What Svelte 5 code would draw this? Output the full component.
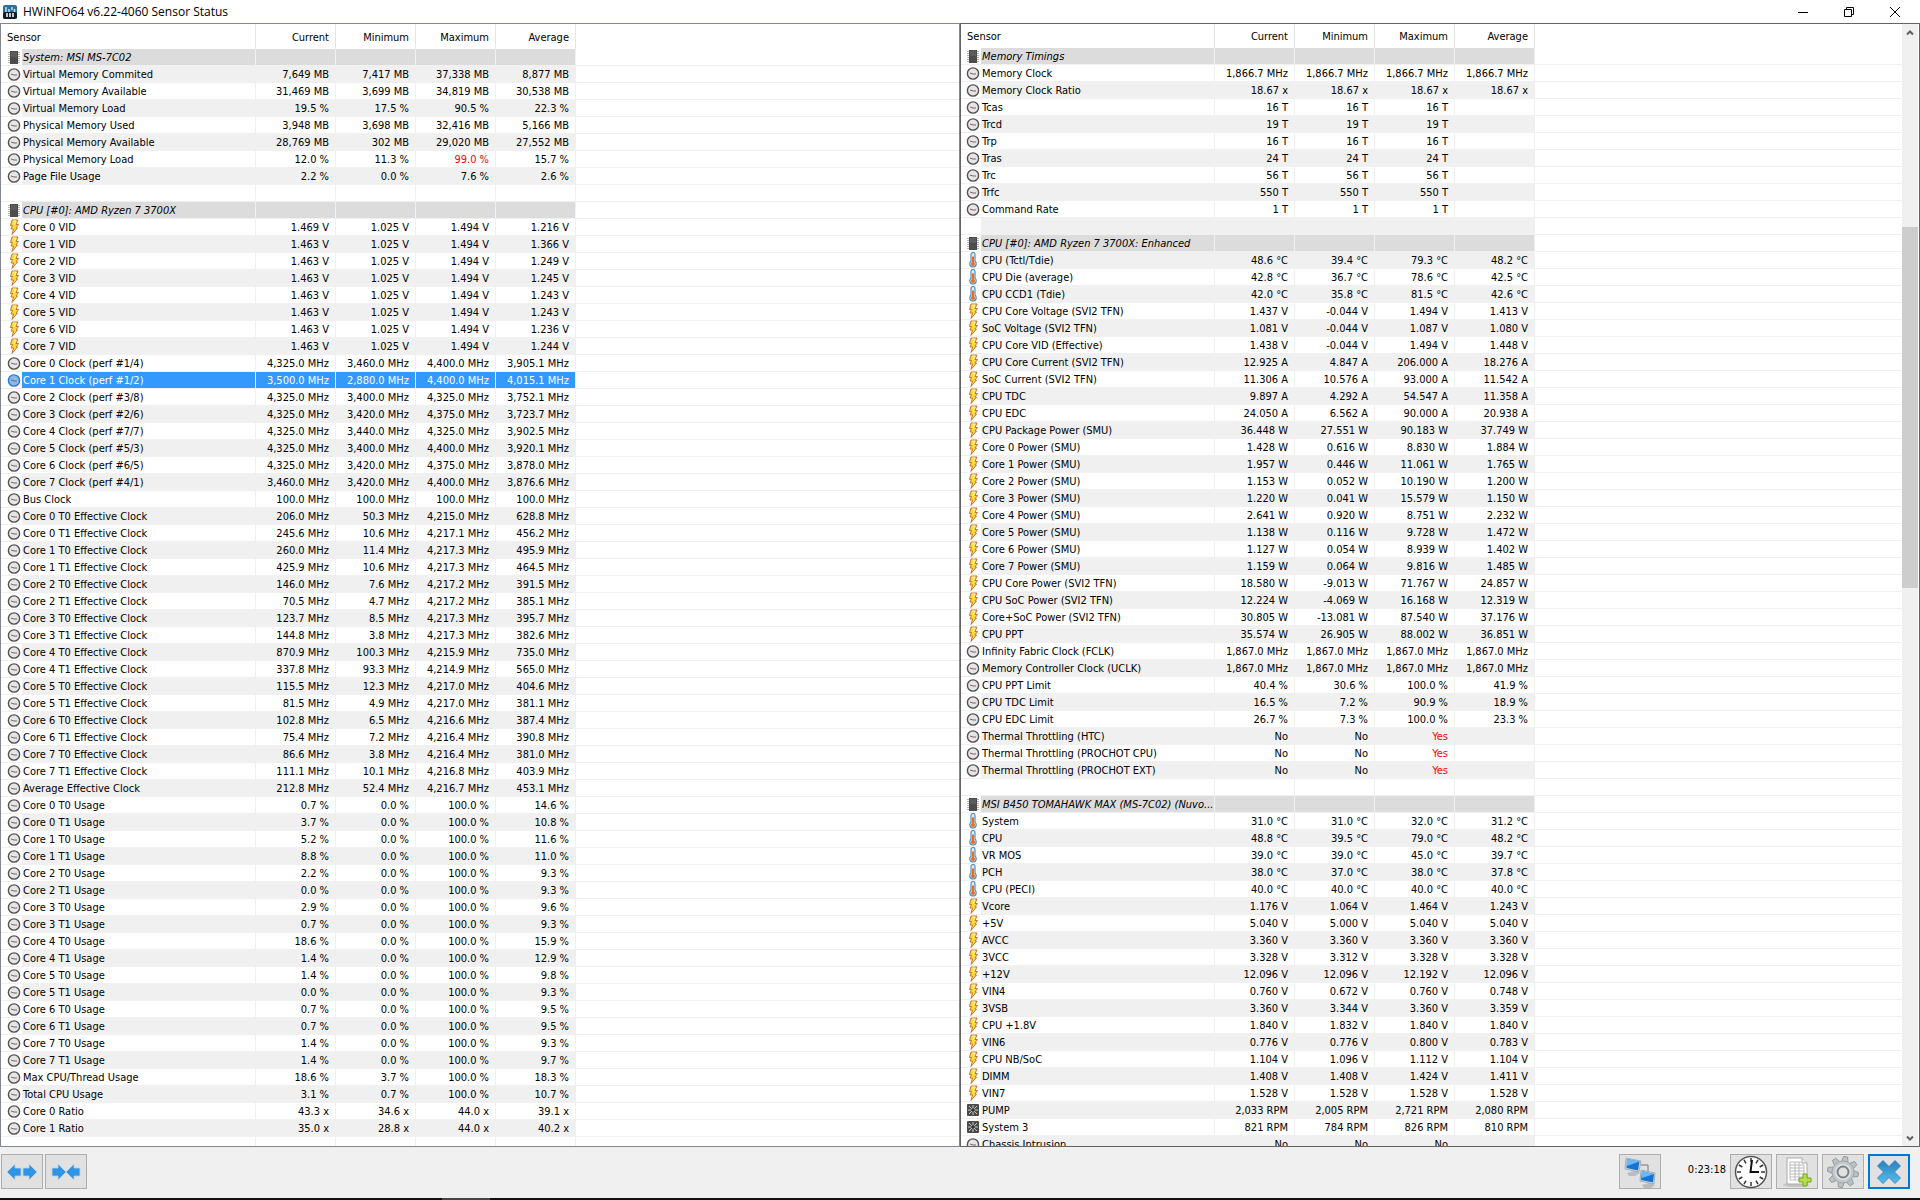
<script>
	const same = (value) => [value, value, value, value];

	// icon, name, current, minimum, maximum, average ("!" marks an alarm value)
	const left = [
		["chip", "System: MSI MS-7C02"],
		["clock", "Virtual Memory Commited", "7,649 MB", "7,417 MB", "37,338 MB", "8,877 MB"],
		["clock", "Virtual Memory Available", "31,469 MB", "3,699 MB", "34,819 MB", "30,538 MB"],
		["clock", "Virtual Memory Load", "19.5 %", "17.5 %", "90.5 %", "22.3 %"],
		["clock", "Physical Memory Used", "3,948 MB", "3,698 MB", "32,416 MB", "5,166 MB"],
		["clock", "Physical Memory Available", "28,769 MB", "302 MB", "29,020 MB", "27,552 MB"],
		["clock", "Physical Memory Load", "12.0 %", "11.3 %", "!99.0 %", "15.7 %"],
		["clock", "Page File Usage", "2.2 %", "0.0 %", "7.6 %", "2.6 %"],
		[],
		["chip", "CPU [#0]: AMD Ryzen 7 3700X"],
		["bolt", "Core 0 VID", "1.469 V", "1.025 V", "1.494 V", "1.216 V"],
		["bolt", "Core 1 VID", "1.463 V", "1.025 V", "1.494 V", "1.366 V"],
		["bolt", "Core 2 VID", "1.463 V", "1.025 V", "1.494 V", "1.249 V"],
		["bolt", "Core 3 VID", "1.463 V", "1.025 V", "1.494 V", "1.245 V"],
		["bolt", "Core 4 VID", "1.463 V", "1.025 V", "1.494 V", "1.243 V"],
		["bolt", "Core 5 VID", "1.463 V", "1.025 V", "1.494 V", "1.243 V"],
		["bolt", "Core 6 VID", "1.463 V", "1.025 V", "1.494 V", "1.236 V"],
		["bolt", "Core 7 VID", "1.463 V", "1.025 V", "1.494 V", "1.244 V"],
		["clock", "Core 0 Clock (perf #1/4)", "4,325.0 MHz", "3,460.0 MHz", "4,400.0 MHz", "3,905.1 MHz"],
		["clock", "Core 1 Clock (perf #1/2)", "3,500.0 MHz", "2,880.0 MHz", "4,400.0 MHz", "4,015.1 MHz"],
		["clock", "Core 2 Clock (perf #3/8)", "4,325.0 MHz", "3,400.0 MHz", "4,325.0 MHz", "3,752.1 MHz"],
		["clock", "Core 3 Clock (perf #2/6)", "4,325.0 MHz", "3,420.0 MHz", "4,375.0 MHz", "3,723.7 MHz"],
		["clock", "Core 4 Clock (perf #7/7)", "4,325.0 MHz", "3,440.0 MHz", "4,325.0 MHz", "3,902.5 MHz"],
		["clock", "Core 5 Clock (perf #5/3)", "4,325.0 MHz", "3,400.0 MHz", "4,400.0 MHz", "3,920.1 MHz"],
		["clock", "Core 6 Clock (perf #6/5)", "4,325.0 MHz", "3,420.0 MHz", "4,375.0 MHz", "3,878.0 MHz"],
		["clock", "Core 7 Clock (perf #4/1)", "3,460.0 MHz", "3,420.0 MHz", "4,400.0 MHz", "3,876.6 MHz"],
		["clock", "Bus Clock", ...same("100.0 MHz")],
		["clock", "Core 0 T0 Effective Clock", "206.0 MHz", "50.3 MHz", "4,215.0 MHz", "628.8 MHz"],
		["clock", "Core 0 T1 Effective Clock", "245.6 MHz", "10.6 MHz", "4,217.1 MHz", "456.2 MHz"],
		["clock", "Core 1 T0 Effective Clock", "260.0 MHz", "11.4 MHz", "4,217.3 MHz", "495.9 MHz"],
		["clock", "Core 1 T1 Effective Clock", "425.9 MHz", "10.6 MHz", "4,217.3 MHz", "464.5 MHz"],
		["clock", "Core 2 T0 Effective Clock", "146.0 MHz", "7.6 MHz", "4,217.2 MHz", "391.5 MHz"],
		["clock", "Core 2 T1 Effective Clock", "70.5 MHz", "4.7 MHz", "4,217.2 MHz", "385.1 MHz"],
		["clock", "Core 3 T0 Effective Clock", "123.7 MHz", "8.5 MHz", "4,217.3 MHz", "395.7 MHz"],
		["clock", "Core 3 T1 Effective Clock", "144.8 MHz", "3.8 MHz", "4,217.3 MHz", "382.6 MHz"],
		["clock", "Core 4 T0 Effective Clock", "870.9 MHz", "100.3 MHz", "4,215.9 MHz", "735.0 MHz"],
		["clock", "Core 4 T1 Effective Clock", "337.8 MHz", "93.3 MHz", "4,214.9 MHz", "565.0 MHz"],
		["clock", "Core 5 T0 Effective Clock", "115.5 MHz", "12.3 MHz", "4,217.0 MHz", "404.6 MHz"],
		["clock", "Core 5 T1 Effective Clock", "81.5 MHz", "4.9 MHz", "4,217.0 MHz", "381.1 MHz"],
		["clock", "Core 6 T0 Effective Clock", "102.8 MHz", "6.5 MHz", "4,216.6 MHz", "387.4 MHz"],
		["clock", "Core 6 T1 Effective Clock", "75.4 MHz", "7.2 MHz", "4,216.4 MHz", "390.8 MHz"],
		["clock", "Core 7 T0 Effective Clock", "86.6 MHz", "3.8 MHz", "4,216.4 MHz", "381.0 MHz"],
		["clock", "Core 7 T1 Effective Clock", "111.1 MHz", "10.1 MHz", "4,216.8 MHz", "403.9 MHz"],
		["clock", "Average Effective Clock", "212.8 MHz", "52.4 MHz", "4,216.7 MHz", "453.1 MHz"],
		["clock", "Core 0 T0 Usage", "0.7 %", "0.0 %", "100.0 %", "14.6 %"],
		["clock", "Core 0 T1 Usage", "3.7 %", "0.0 %", "100.0 %", "10.8 %"],
		["clock", "Core 1 T0 Usage", "5.2 %", "0.0 %", "100.0 %", "11.6 %"],
		["clock", "Core 1 T1 Usage", "8.8 %", "0.0 %", "100.0 %", "11.0 %"],
		["clock", "Core 2 T0 Usage", "2.2 %", "0.0 %", "100.0 %", "9.3 %"],
		["clock", "Core 2 T1 Usage", "0.0 %", "0.0 %", "100.0 %", "9.3 %"],
		["clock", "Core 3 T0 Usage", "2.9 %", "0.0 %", "100.0 %", "9.6 %"],
		["clock", "Core 3 T1 Usage", "0.7 %", "0.0 %", "100.0 %", "9.3 %"],
		["clock", "Core 4 T0 Usage", "18.6 %", "0.0 %", "100.0 %", "15.9 %"],
		["clock", "Core 4 T1 Usage", "1.4 %", "0.0 %", "100.0 %", "12.9 %"],
		["clock", "Core 5 T0 Usage", "1.4 %", "0.0 %", "100.0 %", "9.8 %"],
		["clock", "Core 5 T1 Usage", "0.0 %", "0.0 %", "100.0 %", "9.3 %"],
		["clock", "Core 6 T0 Usage", "0.7 %", "0.0 %", "100.0 %", "9.5 %"],
		["clock", "Core 6 T1 Usage", "0.7 %", "0.0 %", "100.0 %", "9.5 %"],
		["clock", "Core 7 T0 Usage", "1.4 %", "0.0 %", "100.0 %", "9.3 %"],
		["clock", "Core 7 T1 Usage", "1.4 %", "0.0 %", "100.0 %", "9.7 %"],
		["clock", "Max CPU/Thread Usage", "18.6 %", "3.7 %", "100.0 %", "18.3 %"],
		["clock", "Total CPU Usage", "3.1 %", "0.7 %", "100.0 %", "10.7 %"],
		["clock", "Core 0 Ratio", "43.3 x", "34.6 x", "44.0 x", "39.1 x"],
		["clock", "Core 1 Ratio", "35.0 x", "28.8 x", "44.0 x", "40.2 x"],
		[],
	];

	const right = [
		["chip", "Memory Timings"],
		["clock", "Memory Clock", ...same("1,866.7 MHz")],
		["clock", "Memory Clock Ratio", ...same("18.67 x")],
		["clock", "Tcas", "16 T", "16 T", "16 T"],
		["clock", "Trcd", "19 T", "19 T", "19 T"],
		["clock", "Trp", "16 T", "16 T", "16 T"],
		["clock", "Tras", "24 T", "24 T", "24 T"],
		["clock", "Trc", "56 T", "56 T", "56 T"],
		["clock", "Trfc", "550 T", "550 T", "550 T"],
		["clock", "Command Rate", "1 T", "1 T", "1 T"],
		[],
		["chip", "CPU [#0]: AMD Ryzen 7 3700X: Enhanced"],
		["temp", "CPU (Tctl/Tdie)", "48.6 °C", "39.4 °C", "79.3 °C", "48.2 °C"],
		["temp", "CPU Die (average)", "42.8 °C", "36.7 °C", "78.6 °C", "42.5 °C"],
		["temp", "CPU CCD1 (Tdie)", "42.0 °C", "35.8 °C", "81.5 °C", "42.6 °C"],
		["bolt", "CPU Core Voltage (SVI2 TFN)", "1.437 V", "-0.044 V", "1.494 V", "1.413 V"],
		["bolt", "SoC Voltage (SVI2 TFN)", "1.081 V", "-0.044 V", "1.087 V", "1.080 V"],
		["bolt", "CPU Core VID (Effective)", "1.438 V", "-0.044 V", "1.494 V", "1.448 V"],
		["bolt", "CPU Core Current (SVI2 TFN)", "12.925 A", "4.847 A", "206.000 A", "18.276 A"],
		["bolt", "SoC Current (SVI2 TFN)", "11.306 A", "10.576 A", "93.000 A", "11.542 A"],
		["bolt", "CPU TDC", "9.897 A", "4.292 A", "54.547 A", "11.358 A"],
		["bolt", "CPU EDC", "24.050 A", "6.562 A", "90.000 A", "20.938 A"],
		["bolt", "CPU Package Power (SMU)", "36.448 W", "27.551 W", "90.183 W", "37.749 W"],
		["bolt", "Core 0 Power (SMU)", "1.428 W", "0.616 W", "8.830 W", "1.884 W"],
		["bolt", "Core 1 Power (SMU)", "1.957 W", "0.446 W", "11.061 W", "1.765 W"],
		["bolt", "Core 2 Power (SMU)", "1.153 W", "0.052 W", "10.190 W", "1.200 W"],
		["bolt", "Core 3 Power (SMU)", "1.220 W", "0.041 W", "15.579 W", "1.150 W"],
		["bolt", "Core 4 Power (SMU)", "2.641 W", "0.920 W", "8.751 W", "2.232 W"],
		["bolt", "Core 5 Power (SMU)", "1.138 W", "0.116 W", "9.728 W", "1.472 W"],
		["bolt", "Core 6 Power (SMU)", "1.127 W", "0.054 W", "8.939 W", "1.402 W"],
		["bolt", "Core 7 Power (SMU)", "1.159 W", "0.064 W", "9.816 W", "1.485 W"],
		["bolt", "CPU Core Power (SVI2 TFN)", "18.580 W", "-9.013 W", "71.767 W", "24.857 W"],
		["bolt", "CPU SoC Power (SVI2 TFN)", "12.224 W", "-4.069 W", "16.168 W", "12.319 W"],
		["bolt", "Core+SoC Power (SVI2 TFN)", "30.805 W", "-13.081 W", "87.540 W", "37.176 W"],
		["bolt", "CPU PPT", "35.574 W", "26.905 W", "88.002 W", "36.851 W"],
		["clock", "Infinity Fabric Clock (FCLK)", ...same("1,867.0 MHz")],
		["clock", "Memory Controller Clock (UCLK)", ...same("1,867.0 MHz")],
		["clock", "CPU PPT Limit", "40.4 %", "30.6 %", "100.0 %", "41.9 %"],
		["clock", "CPU TDC Limit", "16.5 %", "7.2 %", "90.9 %", "18.9 %"],
		["clock", "CPU EDC Limit", "26.7 %", "7.3 %", "100.0 %", "23.3 %"],
		["clock", "Thermal Throttling (HTC)", "No", "No", "!Yes"],
		["clock", "Thermal Throttling (PROCHOT CPU)", "No", "No", "!Yes"],
		["clock", "Thermal Throttling (PROCHOT EXT)", "No", "No", "!Yes"],
		[],
		["chip", "MSI B450 TOMAHAWK MAX (MS-7C02) (Nuvo..."],
		["temp", "System", "31.0 °C", "31.0 °C", "32.0 °C", "31.2 °C"],
		["temp", "CPU", "48.8 °C", "39.5 °C", "79.0 °C", "48.2 °C"],
		["temp", "VR MOS", "39.0 °C", "39.0 °C", "45.0 °C", "39.7 °C"],
		["temp", "PCH", "38.0 °C", "37.0 °C", "38.0 °C", "37.8 °C"],
		["temp", "CPU (PECI)", ...same("40.0 °C")],
		["bolt", "Vcore", "1.176 V", "1.064 V", "1.464 V", "1.243 V"],
		["bolt", "+5V", "5.040 V", "5.000 V", "5.040 V", "5.040 V"],
		["bolt", "AVCC", ...same("3.360 V")],
		["bolt", "3VCC", "3.328 V", "3.312 V", "3.328 V", "3.328 V"],
		["bolt", "+12V", "12.096 V", "12.096 V", "12.192 V", "12.096 V"],
		["bolt", "VIN4", "0.760 V", "0.672 V", "0.760 V", "0.748 V"],
		["bolt", "3VSB", "3.360 V", "3.344 V", "3.360 V", "3.359 V"],
		["bolt", "CPU +1.8V", "1.840 V", "1.832 V", "1.840 V", "1.840 V"],
		["bolt", "VIN6", "0.776 V", "0.776 V", "0.800 V", "0.783 V"],
		["bolt", "CPU NB/SoC", "1.104 V", "1.096 V", "1.112 V", "1.104 V"],
		["bolt", "DIMM", "1.408 V", "1.408 V", "1.424 V", "1.411 V"],
		["bolt", "VIN7", ...same("1.528 V")],
		["fan", "PUMP", "2,033 RPM", "2,005 RPM", "2,721 RPM", "2,080 RPM"],
		["fan", "System 3", "821 RPM", "784 RPM", "826 RPM", "810 RPM"],
		["clock", "Chassis Intrusion", "No", "No", "No"],
	];

	const columns = ["Current", "Minimum", "Maximum", "Average"];
	const ticks = [0, 30, 60, 90, 120, 150, 180, 210, 240, 270, 300, 330];
	const teeth = [0, 45, 90, 135, 180, 225, 270, 315];

	let selected = left[19];
</script>

{#snippet icon(kind)}
	<svg class="icon" viewBox="0 0 16 16" aria-hidden="true">
		{#if kind === "clock"}
			<circle cx="8" cy="8.500" r="5.600" fill="#e6e6e6" stroke="#505050" stroke-width="1.400" />
			<path d="M5 8l3 1h3" fill="none" stroke="#7d6262" stroke-width="1" />
		{:else if kind === "chip"}
			<path d="M2 3.500h12M2 5.500h12M2 7.500h12M2 9.500h12M2 11.500h12M2 13.500h12" stroke="#b4b4b4" stroke-width="1" />
			<rect x="4" y="2" width="8" height="13" fill="#4c4c4c" />
			<rect x="5" y="3" width="6" height="5" fill="#5c5c5c" />
		{:else if kind === "bolt"}
			<path d="M6 1h6l-2 4.500h2.500L10 9h1.500L6 15.500 7.500 10H5l1.500-3.500H4.500z" fill="#fbdc35" stroke="#c4662b" stroke-width=".9" />
			<path d="M7 2h3L8 6" fill="none" stroke="#fff6b5" />
		{:else if kind === "temp"}
			<path d="M6 9V2.500a2 2 0 0 1 4 0V9c2 2 1.500 6-2 6S4 11 6 9z" fill="#d9edf8" stroke="#5b8fb3" stroke-width="1.200" />
			<path d="M8 4.500v7" stroke="#ee6a20" stroke-width="2" />
			<circle cx="8" cy="12" r="2" fill="#ee6a20" />
		{:else}
			<rect x="2" y="2" width="12" height="12" rx="1" fill="#4a4a4a" />
			<path d="M8 3v10M3 8h10M4 4l8 8M12 4l-8 8" stroke="#c9c9c9" stroke-width="1" />
			<circle cx="8" cy="8" r="1.800" fill="#333" />
		{/if}
	</svg>
{/snippet}

{#snippet sensors(rows, side)}
	<table class={side}>
		<colgroup>
			<col class="c-name" />
			{#each columns as column}
				<col class="c-value" />
			{/each}
			<col />
		</colgroup>
		<thead>
			<tr>
				<th class="first">Sensor</th>
				{#each columns as column}
					<th>{column}</th>
				{/each}
				<td></td>
			</tr>
		</thead>
		<tbody>
			{#each rows as row}
				<tr
					class:group={row[0] === "chip"}
					class:selected={row === selected}
					on:click={() => (selected = row)}
				>
					<td class="name">
						<div class="name-box">
							<span class="icon-box">
								{#if row[0]}{@render icon(row[0])}{/if}
							</span>
							<span class="label">{row[1] || ""}</span>
						</div>
					</td>
					{#each [2, 3, 4, 5] as i}
						<td class="value" class:alarm={row[i]?.startsWith("!")}>
							{(row[i] || "").replace("!", "")}
						</td>
					{/each}
					<td class="rest"></td>
				</tr>
			{/each}
		</tbody>
	</table>
{/snippet}

<div class="window">
	<header class="titlebar">
		<svg class="logo" viewBox="0 0 14 14" aria-hidden="true">
			<rect x="0" y="0" width="14" height="14" rx="2" fill="#2f6f94" />
			<rect x="0" y="7" width="14" height="7" rx="2" fill="#101c26" />
			<path d="M3 2v5M6 4v3M9 2v3M11.500 4v3" stroke="#b7e2f5" stroke-width="1.500" />
			<path d="M4 8v4M7 8v4M10 8v4" stroke="#fff" stroke-width="1.500" />
		</svg>
		<h1>HWiNFO64 v6.22-4060 Sensor Status</h1>
		<button class="caption" aria-label="Minimize">
			<svg viewBox="0 0 12 12"><path d="M1 6.500h10" /></svg>
		</button>
		<button class="caption" aria-label="Restore">
			<svg viewBox="0 0 12 12"><path d="M1.500 3.500h7v7h-7zM3.500 3.500v-2h7v7h-2" /></svg>
		</button>
		<button class="caption" aria-label="Close">
			<svg viewBox="0 0 12 12"><path d="M1 1l10 10M11 1L1 11" /></svg>
		</button>
	</header>

	<main>
		<section class="panel panel-left">
			<div class="list">{@render sensors(left, "left")}</div>
		</section>
		<section class="panel panel-right">
			<div class="list">{@render sensors(right, "right")}</div>
			<div class="scrollbar">
				<button aria-label="Scroll up"><svg viewBox="0 0 8 6"><path d="M1 4.500l3-3 3 3" /></svg></button>
				<div class="before"></div>
				<div class="thumb"></div>
				<div class="after"></div>
				<button aria-label="Scroll down"><svg viewBox="0 0 8 6"><path d="M1 1.500l3 3 3-3" /></svg></button>
			</div>
		</section>
	</main>

	<footer>
		<div class="pair">
			<button class="tool" aria-label="Expand columns">
				<svg viewBox="0 0 32 20" width="32" height="20">
					<path d="M1 10l8-8v4h6v8H9v4zM31 10l-8-8v4h-6v8h6v4z" fill="#2f93e6" stroke="#b9d3e6" stroke-width=".8" />
				</svg>
			</button>
			<button class="tool" aria-label="Shrink columns">
				<svg viewBox="0 0 32 20" width="32" height="20">
					<path d="M16 10L8 2v4H2v8h6v4zM16 10l8-8v4h6v8h-6v4z" fill="#2f93e6" stroke="#b9d3e6" stroke-width=".8" />
				</svg>
			</button>
		</div>
		<div class="spacer"></div>
		<button class="tool" aria-label="Remote monitoring">
			<svg viewBox="0 0 32 32" width="32" height="32">
				<path d="M17 9h7v6" fill="none" stroke="#777" />
				<path d="M3 17l8-2 5 2-5 3H5zM18 29l7-2 6 2-4 3h-7z" fill="#b9bdc0" />
				<path d="M2 2l15 3-2 11L1 13z" fill="#d7dde1" stroke="#8e9aa2" stroke-width=".7" />
				<path d="M3 3l12.500 2.500L14 14.500 2.500 12z" fill="#1673d1" />
				<path d="M3 3l12.500 2.500L3 10z" fill="#68b9f5" />
				<path d="M17 14l14 3-1 11-14-3z" fill="#d7dde1" stroke="#8e9aa2" stroke-width=".7" />
				<path d="M18 15l12 3-1 8.500L17 24z" fill="#1673d1" />
				<path d="M18 15l12 3-12 4z" fill="#68b9f5" />
			</svg>
		</button>
		<span class="elapsed">0:23:18</span>
		<button class="tool" aria-label="Reset clock">
			<svg viewBox="0 0 34 34" width="34" height="34">
				<circle cx="17" cy="17" r="15.500" fill="#fff" stroke="#555" stroke-width="1.500" />
				{#each ticks as angle}
					<path d="M17 3v4" stroke="#333" stroke-width="1.500" transform="rotate({angle} 17 17)" />
				{/each}
				<path d="M18 5l-1.500 12H25" fill="none" stroke="#111" stroke-width="2" />
			</svg>
		</button>
		<button class="tool" aria-label="Start logging">
			<svg viewBox="0 0 32 32" width="32" height="32">
				<ellipse cx="15" cy="29" rx="13" ry="2" fill="#c4c4c4" />
				<path d="M6 2h15l5 5v21H6z" fill="#fff" stroke="#aaa" />
				<path d="M21 2v5h5" fill="#eee" stroke="#aaa" />
				<path d="M9 6h11M9 9h14M9 12h14M9 15h14M9 18h14M9 21h14M9 24h14M9 6v18M14 6v18M18 6v18M23 9v15" fill="none" stroke="#bbb" />
				<path d="M22 18h4v4h4v4h-4v4h-4v-4h-4v-4h4z" fill="#b5e04a" stroke="#6fa31c" />
			</svg>
		</button>
		<button class="tool" aria-label="Settings">
			<svg viewBox="0 0 32 32" width="32" height="32">
				{#each teeth as angle}
					<path d="M12.500 7l1.500-6.500h4L19.500 7z" fill="#bcc1c4" stroke="#8b9194" stroke-width=".8" transform="rotate({angle + 10} 16 16)" />
				{/each}
				<circle cx="16" cy="16" r="11" fill="#c3c8ca" stroke="#9aa0a3" stroke-width=".8" />
				<circle cx="16" cy="16" r="8" fill="#e2e5e6" />
				<circle cx="16" cy="16" r="5.500" fill="#e1e1e1" stroke="#7b8184" stroke-width="2" />
			</svg>
		</button>
		<button class="tool close" aria-label="Close sensors">
			<svg viewBox="0 0 26 26" width="26" height="26">
				<defs>
					<linearGradient id="cross" x2="0" y2="1">
						<stop offset="0" stop-color="#2a80bd" />
						<stop offset="1" stop-color="#56bdf0" />
					</linearGradient>
				</defs>
				<path d="M7 1.500l6 6 6-6 5.500 5.500-6 6 6 6-5.500 5.500-6-6-6 6L1.500 19l6-6-6-6z" fill="url(#cross)" stroke="#2e7fb5" stroke-width=".8" />
			</svg>
		</button>
	</footer>
	<div class="taskbar">
		<div class="task-gap"></div>
		<div class="task"></div>
	</div>
</div>

<style>
	:global(body) {
		margin: 0;
	}

	.window {
		height: 100vh;
		display: flex;
		flex-direction: column;
		overflow: hidden;
		background: #fff;
		color: #000;
		font-family: Tahoma, "DejaVu Sans Condensed", sans-serif;
		font-size: 11px;
	}

	button {
		display: flex;
		align-items: center;
		justify-content: center;
		box-sizing: border-box;
		padding: 0;
		border: none;
		background: none;
	}

	.titlebar {
		display: flex;
		align-items: center;
		height: 23px;
		flex: none;
		padding: 0 2px 0 3px;
	}

	.logo {
		width: 14px;
		height: 14px;
		margin-right: 6px;
	}

	h1 {
		flex: 1;
		margin: 0;
		font-family: "Segoe UI", "Open Sans", sans-serif;
		font-size: 12px;
		font-weight: normal;
	}

	.caption {
		width: 46px;
		height: 20px;
	}

	.caption svg {
		width: 12px;
		height: 12px;
		fill: none;
		stroke: #000;
	}

	main {
		flex: 1;
		min-height: 0;
		display: flex;
	}

	.panel {
		flex: 1 1 0;
		display: flex;
		box-sizing: border-box;
		min-width: 0;
		overflow: hidden;
	}

	.panel-left {
		border: 1px solid #828790;
	}

	.panel-right {
		border: 1px solid #646464;
	}

	.list {
		flex: 1;
		min-width: 0;
		overflow: hidden;
	}

	table {
		width: 100%;
		table-layout: fixed;
		border-spacing: 0;
		cursor: default;
	}

	.left .c-name {
		width: 255px;
	}

	.right .c-name {
		width: 254px;
	}

	.c-value {
		width: 80px;
	}

	th {
		height: 25px;
		box-sizing: border-box;
		padding: 1px 6px 0;
		border-right: 1px solid #e5e5e5;
		font-weight: normal;
		text-align: right;
	}

	.right th {
		height: 24px;
	}

	th.first {
		text-align: left;
	}

	tbody td {
		height: 17px;
		box-sizing: border-box;
		padding: 0;
		border-right: 1px solid #f0f0f0;
		border-bottom: 1px solid #f0f0f0;
		line-height: 14px;
		white-space: nowrap;
	}

	tbody td.value {
		padding: 2px 6px 0 0;
		text-align: right;
	}

	tbody td.rest {
		border-right: none;
	}

	.name-box {
		display: flex;
		height: 16px;
	}

	.icon-box {
		flex: none;
		width: 21px;
		padding-left: 5px;
		box-sizing: border-box;
		background: #fff;
	}

	.right .icon-box {
		width: 20px;
		padding-left: 4px;
	}

	.icon {
		display: block;
		width: 16px;
		height: 16px;
	}

	.label {
		flex: 1;
		min-width: 0;
		padding: 2px 0 0 1px;
	}

	.left tbody tr:nth-child(even) .label,
	.left tbody tr:nth-child(even) .value,
	.right tbody tr:nth-child(odd) .label,
	.right tbody tr:nth-child(odd) .value {
		background: #f0f0f0;
	}

	table tbody tr.group:nth-child(n) .label,
	table tbody tr.group:nth-child(n) .value {
		background: #dcdcdc;
		font-style: italic;
	}

	table tbody tr.selected:nth-child(n) .label,
	table tbody tr.selected:nth-child(n) .value {
		background: #3399ff;
		color: #fff;
	}

	.selected .icon circle {
		fill: #85bcf2;
		stroke: #2b78c4;
	}

	.alarm {
		color: #f00;
	}

	.scrollbar {
		flex: none;
		width: 16px;
		display: flex;
		flex-direction: column;
		background: #f0f0f0;
		border-right: 1px solid #fff;
	}

	.scrollbar button {
		height: 17px;
	}

	.scrollbar svg {
		width: 8px;
		height: 6px;
		fill: none;
		stroke: #606060;
		stroke-width: 2;
	}

	.before {
		flex: 186;
	}

	.thumb {
		flex: 361;
		background: #cdcdcd;
	}

	.after {
		flex: 541;
	}

	footer {
		flex: none;
		height: 51px;
		box-sizing: border-box;
		display: flex;
		align-items: flex-start;
		gap: 4px;
		padding: 7px 10px 0 1px;
		background: #f0f0f0;
	}

	.pair {
		display: flex;
		gap: 2px;
	}

	.tool {
		width: 42px;
		height: 35px;
		border: 1px solid #adadad;
		background: #e1e1e1;
	}

	.tool.close {
		border: 2px solid #0078d7;
	}

	.spacer {
		flex: 1;
	}

	.elapsed {
		width: 61px;
		line-height: 32px;
		text-align: right;
	}

	.taskbar {
		flex: none;
		height: 2px;
		display: flex;
		background: #101010;
	}

	.task-gap {
		width: 23%;
	}

	.task {
		width: 48px;
		background: #444;
	}
</style>
